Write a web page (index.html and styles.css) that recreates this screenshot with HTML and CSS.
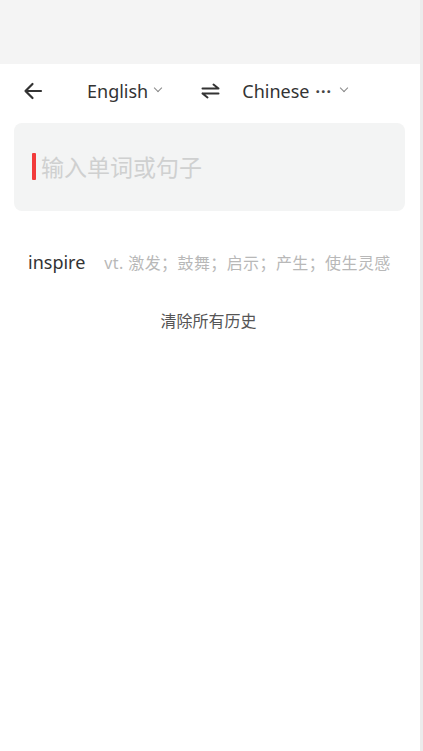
FILE: index.html
```html
<!DOCTYPE html>
<html lang="zh-CN">
<head>
    <meta charset="UTF-8">
    <meta name="viewport" content="width=device-width, initial-scale=1.0">
    <title>Translate</title>
    <link rel="stylesheet" href="styles.css">
</head>
<body>
    <div class="page">
        <div class="status-bar"></div>

        <!-- Language switcher -->
        <div class="lang-bar">
            <span class="back">
                <svg width="20" height="18" viewBox="0 0 20 18">
                    <path d="M18 9H2.5M9.5 2L2.5 9l7 7" fill="none" stroke="#333" stroke-width="2.2" stroke-linecap="round" stroke-linejoin="round"/>
                </svg>
            </span>
            <span class="lang lang-from">English<span class="chevron"></span></span>
            <span class="swap">
                <svg width="19" height="16" viewBox="0 0 19 16">
                    <path d="M1.5 5.5h16M12.5 1.5l5 4M17.5 10.5h-16M6.5 14.5l-5-4" fill="none" stroke="#333" stroke-width="2" stroke-linecap="round" stroke-linejoin="round"/>
                </svg>
            </span>
            <span class="lang lang-to">Chinese<span class="more">···</span><span class="chevron"></span></span>
        </div>

        <!-- Input box -->
        <div class="input-box">
            <span class="caret"></span>
            <span class="placeholder">输入单词或句子</span>
        </div>

        <!-- History -->
        <ul class="history">
            <li class="history-item">
                <span class="word">inspire</span>
                <span class="meaning">vt. 激发；鼓舞；启示；产生；使生灵感</span>
            </li>
        </ul>
        <div class="clear-history">清除所有历史</div>
    </div>
</body>
</html>
```

FILE: styles.css
```css
html, body {
    margin: 0;
    padding: 0;
    height: 100%;
}

body {
    font-family: "Noto Sans", "Noto Sans CJK SC", sans-serif;
    background-color: #fff;
    color: #333;
}

.page {
    height: 100%;
    border-right: 3px solid #ececec;
    box-sizing: border-box;
}

.status-bar {
    height: 64px;
    background-color: #f4f4f4;
}

.lang-bar {
    display: flex;
    align-items: center;
    height: 53px;
    padding-left: 23px;
}

.back {
    display: flex;
    width: 20px;
}

.lang {
    display: flex;
    align-items: center;
    font-size: 18px;
    color: #333;
}

.lang-from {
    margin-left: 44px;
}

.chevron {
    width: 5px;
    height: 5px;
    border-right: 1.3px solid #888;
    border-bottom: 1.3px solid #888;
    transform: rotate(45deg);
    margin-left: 7px;
    margin-top: -5px;
}

.swap {
    display: flex;
    margin-left: 40px;
}

.lang-to {
    margin-left: 22px;
}

.more {
    font-size: 16px;
    font-weight: bold;
    color: #444;
    margin-left: 6px;
    letter-spacing: 1px;
}

.lang-to .chevron {
    margin-left: 9px;
}

.input-box {
    display: flex;
    align-items: center;
    margin: 6px 15px 0 14px;
    height: 88px;
    padding: 0 0 0 18px;
    background-color: #f3f4f4;
    border-radius: 8px;
}

.caret {
    width: 4px;
    height: 27px;
    background-color: #f23b3b;
    border-radius: 1px;
    margin-right: 5px;
    margin-top: -2px;
}

.placeholder {
    font-size: 23px;
    color: #cfd0d0;
    margin-top: -2px;
}

.history {
    list-style: none;
    margin: 0;
    padding: 25px 0 0 28px;
}

.history-item {
    display: flex;
    align-items: baseline;
    height: 52px;
    line-height: 52px;
}

.word {
    font-size: 18px;
    color: #333;
}

.meaning {
    font-size: 16px;
    color: #b8b8b8;
    margin-left: 19px;
    letter-spacing: 0.4px;
}

.clear-history {
    text-align: center;
    font-size: 16px;
    color: #555;
    margin-top: 20px;
    padding-right: 3px;
}
```
